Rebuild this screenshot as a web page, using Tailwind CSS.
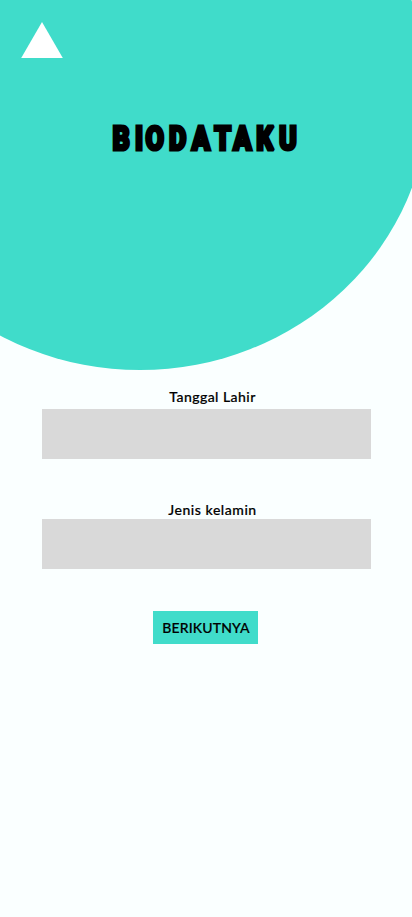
<!DOCTYPE html>
<html lang="id">
<head>
<meta charset="utf-8">
<meta name="viewport" content="width=device-width, initial-scale=1">
<title>Biodataku</title>
<script src="https://cdn.jsdelivr.net/npm/@tailwindcss/browser@4"></script>
</head>
<body class="bg-[#faffff] font-['Lato',sans-serif] text-black">
<main class="relative flex h-[917px] w-[412px] flex-col overflow-hidden bg-[#faffff]">
  <div class="absolute -left-[149px] -top-[181px] h-[551px] w-[578px] rounded-[50%] bg-[#40dcca]"></div>
  <header class="relative h-[389px] shrink-0 pt-[22px]">
    <svg class="ml-[21px] block h-9 w-[42px]" viewBox="0 0 42 36"><path d="M21 0 41.8 36H.2Z" fill="#fff"/></svg>
    <h1 class="mt-[50px]">
      <svg class="block h-16 w-[412px] overflow-visible" viewBox="0 0 412 64">
        <text transform="translate(0 41.7) scale(.8 1)" x="140.6 168.6 182 211.1 239.6 267.8 291.6 320.4 348.9" y="0" font-family="Roboto, sans-serif" font-weight="900" font-size="33.5" stroke="#000" stroke-width="3.2" stroke-linejoin="miter" stroke-miterlimit="2">BIODATAKU</text>
      </svg>
    </h1>
  </header>
  <form class="relative flex flex-col pl-[42px]">
    <label for="lahir" class="flex h-5 w-[329px] justify-center pl-[12px] text-[14px] font-medium leading-[16px] tracking-[0.45px] [-webkit-text-stroke:0.2px_black]">Tanggal Lahir</label>
    <input id="lahir" class="h-[50px] w-[329px] bg-[#d9d9d9] px-3 outline-none">
    <label for="kelamin" class="mt-[43px] flex h-[17px] w-[329px] justify-center pl-[12px] text-[14px] font-medium leading-[16px] tracking-[0.55px] [-webkit-text-stroke:0.2px_black]">Jenis kelamin</label>
    <input id="kelamin" class="h-[50px] w-[329px] bg-[#d9d9d9] px-3 outline-none">
    <button type="button" class="ml-[111px] mt-[42px] flex h-[33px] w-[105px] items-center justify-center whitespace-nowrap bg-[#40dcca] pl-px text-[14px] font-medium tracking-[0.15px] [-webkit-text-stroke:0.2px_black]">BERIKUTNYA</button>
  </form>
</main>
</body>
</html>
